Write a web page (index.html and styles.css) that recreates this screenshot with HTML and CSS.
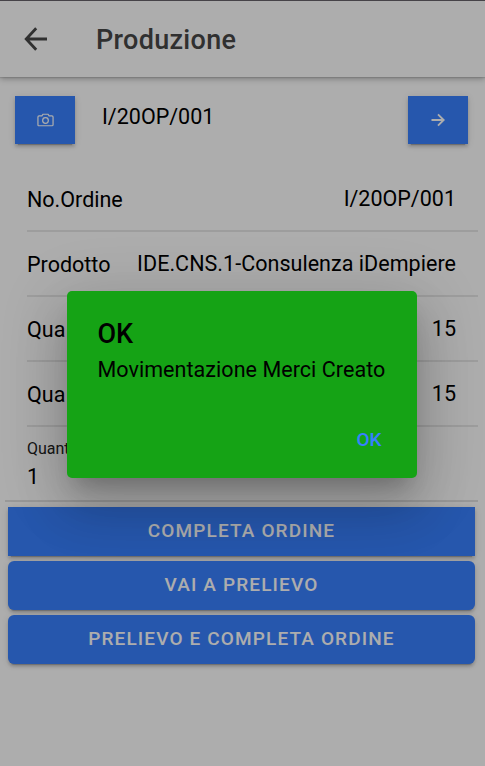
FILE: index.html
```html
<!DOCTYPE html>
<html lang="it">
<head>
<meta charset="utf-8">
<title>Produzione</title>
<link rel="stylesheet" href="styles.css">
</head>
<body>
<header class="toolbar">
  <svg class="back" viewBox="0 0 24 24"><path d="M12.2 1.2 2.2 12 12.2 22.8M2.2 12H23" fill="none" stroke="currentColor" stroke-width="2.8"/></svg>
  <h1 class="title">Produzione</h1>
</header>
<main class="content">
  <div class="scan">
    <button class="btn icon-btn" aria-label="Fotocamera"><svg class="camera" viewBox="0 0 18 14"><path d="M2.2 2.7h3L6.3.9h5.4l1.1 1.8h3q1.2 0 1.2 1.2v8q0 1.2-1.2 1.2H2.2Q1 13.100 1 11.900v-8q0-1.200 1.200-1.200z"/><circle cx="9" cy="7.500" r="3"/></svg></button>
    <span class="code">I/20OP/001</span>
    <button class="btn icon-btn" aria-label="Avanti"><svg class="next" viewBox="0 0 14 14"><path d="M.5 7h12M7 1.300 12.700 7 7 12.700"/></svg></button>
  </div>
  <div class="list">
    <div class="item"><span class="label">No.Ordine</span><span>I/20OP/001</span></div>
    <div class="item"><span class="label">Prodotto</span><span class="product">IDE.CNS.1-Consulenza iDempiere</span></div>
    <div class="item"><span class="label">Qua</span><span>15</span></div>
    <div class="item"><span class="label">Qua</span><span>15</span></div>
  </div>
  <div class="field"><span class="field-label">Quant</span><span>1</span></div>
  <div class="actions">
    <button class="btn square">COMPLETA ORDINE</button>
    <button class="btn">VAI A PRELIEVO</button>
    <button class="btn">PRELIEVO E COMPLETA ORDINE</button>
  </div>
</main>
<div class="backdrop"></div>
<div class="alert" role="alertdialog">
  <h2 class="alert-title">OK</h2>
  <p class="alert-message">Movimentazione Merci Creato</p>
  <button class="alert-ok">OK</button>
</div>
</body>
</html>
```
FILE: styles.css
```css
* { box-sizing: border-box; }
body { margin: 0; height: 766px; overflow: hidden; background: #fff; color: #000; font-family: Roboto, sans-serif; font-size: 21.5px; }
button { font-family: inherit; border: 0; padding: 0; }
.toolbar { height: 77px; border-top: 1px solid #67636a; display: flex; align-items: center; padding-left: 24px; color: #484848; box-shadow: 0 2px 6px rgba(0,0,0,.28), 0 1px 1px rgba(0,0,0,.1); }
.back { width: 24px; height: 24px; }
.title { margin: 0 0 0 48px; padding-top: 2px; font-size: 27px; font-weight: 500; letter-spacing: .3px; line-height: 32px; }
.btn { background: #3880ff; color: #fff; font-size: 19px; font-weight: 500; letter-spacing: 1.13px; height: 49px; padding-bottom: 2px; border-radius: 6px; box-shadow: 0 4px 1px -3px rgba(0,0,0,.2), 0 3px 3px rgba(0,0,0,.14), 0 1px 7px rgba(0,0,0,.12); }
.scan { display: flex; height: 90px; padding: 19px 17px 0 15px; }
.icon-btn { width: 60px; height: 48px; padding: 0; border-radius: 0; display: flex; align-items: center; justify-content: center; }
.icon-btn svg { fill: none; stroke: #fff; stroke-width: 1.3; }
.camera { width: 17px; height: 14px; }
.next { width: 14px; height: 14px; }
.next path { stroke-width: 1.9; }
.code { flex: 1; margin-left: 27px; line-height: 42px; }
.list { margin: 0 7px 0 27px; }
.item { height: 65px; display: flex; justify-content: space-between; align-items: center; padding-right: 22px; border-bottom: 2px solid #e8e8e8; }
.label { padding-top: 2px; }
.product { letter-spacing: .04px; }
.field { margin: 0 7px 0 5px; height: 75px; padding: 11px 0 0 22px; display: flex; flex-direction: column; border-bottom: 2px solid #e0e0e0; line-height: 34px; }
.field-label { font-size: 16px; line-height: 22px; color: #222; }
.actions { display: flex; flex-direction: column; gap: 5px; padding: 5px 10px 0 8px; }
.square { border-radius: 0; }
.backdrop { position: absolute; inset: 0; background: rgba(0,0,0,.32); }
.alert { position: absolute; left: 66.500px; top: 291px; width: 350px; height: 187px; border-radius: 5px; background: #15a315; padding: 27px 31px; box-shadow: 0 15px 20px -9px rgba(0,0,0,.2), 0 32px 51px 4px rgba(0,0,0,.14), 0 12px 62px 11px rgba(0,0,0,.12); }
.alert-title { margin: 0; font-size: 27px; line-height: 32px; font-weight: 500; }
.alert-message { margin: 5px 0 0; line-height: 30px; white-space: nowrap; letter-spacing: .05px; }
.alert-ok { display: block; margin: 43px 4px 0 auto; background: none; color: #3880ff; font-size: 19px; line-height: 24px; font-weight: 500; }
```
